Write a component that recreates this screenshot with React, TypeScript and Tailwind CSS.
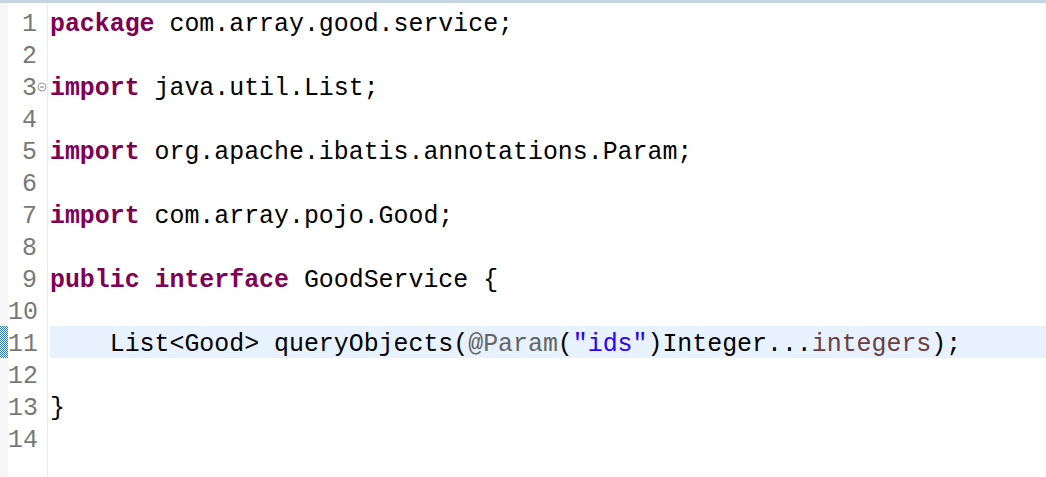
import React from "react";

type Token = { text: string; kind?: "kw" | "str" | "ann" | "param" };

// source lines, already split into coloured tokens
const lines: Token[][] = [
  [{ text: "package", kind: "kw" }, { text: " com.array.good.service;" }],
  [],
  [{ text: "import", kind: "kw" }, { text: " java.util.List;" }],
  [],
  [{ text: "import", kind: "kw" }, { text: " org.apache.ibatis.annotations.Param;" }],
  [],
  [{ text: "import", kind: "kw" }, { text: " com.array.pojo.Good;" }],
  [],
  [
    { text: "public", kind: "kw" },
    { text: " " },
    { text: "interface", kind: "kw" },
    { text: " GoodService {" },
  ],
  [],
  [
    { text: "    List<Good> queryObjects(" },
    { text: "@Param", kind: "ann" },
    { text: "(" },
    { text: '"ids"', kind: "str" },
    { text: ")Integer..." },
    { text: "integers", kind: "param" },
    { text: ");" },
  ],
  [],
  [{ text: "}" }],
  [],
];

const tokenClass = (kind?: Token["kind"]) => {
  if (kind === "kw") return "text-[#7f0055] font-bold";
  if (kind === "str") return "text-[#2a00ff]";
  if (kind === "ann") return "text-[#646464]";
  if (kind === "param") return "text-[#6a3e3e]";
  return "text-black";
};

const FoldMarker = () => (
  <svg width="10" height="10" viewBox="0 0 10 10">
    <circle cx="5" cy="5" r="4" fill="white" stroke="#9a9a9a" strokeWidth="1" />
    <line x1="3" y1="5" x2="7" y2="5" stroke="#7a7a7a" strokeWidth="1" />
  </svg>
);

const ChangeMarker = () => (
  <svg width="8" height="32" viewBox="0 0 8 32">
    <defs>
      <pattern id="chk" width="2" height="2" patternUnits="userSpaceOnUse">
        <rect width="2" height="2" fill="#ffffff" />
        <rect width="1" height="1" fill="#2f74c8" />
        <rect x="1" y="1" width="1" height="1" fill="#2f74c8" />
      </pattern>
    </defs>
    <rect width="8" height="32" fill="url(#chk)" />
  </svg>
);

const App = () => {
  const currentLine = 11;

  return (
    <div
      className="w-[1046px] h-[477px] bg-white flex flex-col overflow-hidden border-t-[3px] border-[#c6d4e6]"
      style={{ fontFamily: '"Liberation Mono", "DejaVu Sans Mono", monospace' }}
    >
      {/* small gap above line 1 */}
      <div className="h-[3px] flex shrink-0">
        <div className="w-[8px] bg-[#f6f6f6]" />
        <div className="w-[39px]" />
        <div className="w-px bg-[#ececec]" />
      </div>

      {lines.map((tokens, i) => {
        const num = i + 1;
        const isCurrent = num === currentLine;
        return (
          <div key={num} className="h-[32px] flex shrink-0 text-[24.9px] leading-[32px]">
            <div className="w-[8px] bg-[#f6f6f6]">{isCurrent && <ChangeMarker />}</div>
            <div className="w-[29px] text-right text-[#787878] pt-[2px]">{num}</div>
            <div className="w-[10px] flex items-center justify-center pt-[2px]">{num === 3 && <FoldMarker />}</div>
            <div className="w-px bg-[#ececec]" />
            <div className="w-[2px]" />
            <div className={`flex-1 whitespace-pre pt-[2px] ${isCurrent ? "bg-[#e8f2fe]" : ""}`}>
              {tokens.map((t, j) => (
                <span key={j} className={tokenClass(t.kind)}>
                  {t.text}
                </span>
              ))}
            </div>
          </div>
        );
      })}

      {/* rest of the editor below the last line */}
      <div className="flex-1 flex">
        <div className="w-[8px] bg-[#f6f6f6]" />
        <div className="w-[39px]" />
        <div className="w-px bg-[#ececec]" />
      </div>
    </div>
  );
};

export default App;
